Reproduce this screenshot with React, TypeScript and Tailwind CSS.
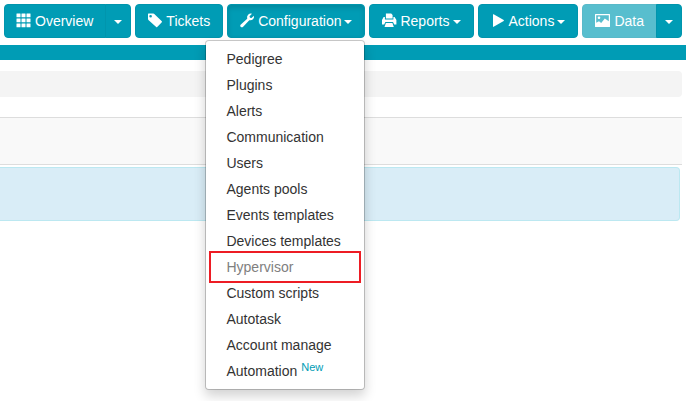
import type { ReactNode } from "react";

const BUTTON_BASE =
  "flex h-[34px] items-center whitespace-nowrap border border-[#0095ad] bg-[#009cb5] text-sm leading-5 text-white";
const BUTTON = `${BUTTON_BASE} gap-1 px-3`;
const CARET_BUTTON = `${BUTTON_BASE} -ml-px justify-center rounded-r px-2`;

function Icon({ children }: { children: ReactNode }) {
  return (
    <svg aria-hidden="true" viewBox="0 0 14 14" className="size-3.5 shrink-0 overflow-visible" fill="currentColor">
      {children}
    </svg>
  );
}

function GridIcon() {
  return (
    <Icon>
      {[0, 5, 10].map((y) =>
        [0, 5, 10].map((x) => <rect key={`${x}-${y}`} x={x - 0.5} y={y - 0.5} width="4" height="3.8" rx="0.3" />),
      )}
    </Icon>
  );
}

function TagIcon() {
  return (
    <Icon>
      <path
        fillRule="evenodd"
        d="M0.5 -0.5H5.4L6.3 -0.1L13.8 7.2Q14.2 7.7 13.8 8.2L9.2 13Q8.7 13.5 8.2 13L0.4 6L0 5.1V0Q0 -0.5 0.5 -0.5ZM2.6 0.9A1.3 1.3 0 1 0 2.6 3.5A1.3 1.3 0 1 0 2.6 0.9Z"
      />
    </Icon>
  );
}

function WrenchIcon() {
  return (
    <Icon>
      <path d="M12 -0.3L9.5 2.2L10 3.7L11.5 4.1L13.9 1.7Q14.4 3.8 13 5.3Q11.5 6.7 9.3 6.2L2.9 13Q1.8 13.8 0.6 12.8Q-0.3 11.7 0.6 10.7L7.2 4.7Q6.6 2.3 8.1 0.7Q9.9 -1 12 -0.3Z" />
    </Icon>
  );
}

function PrintIcon() {
  return (
    <Icon>
      <path d="M3.9 -0.5H9.2L10.6 1V4.6H3.9ZM1.6 3H2.9V5.5H11.4V3H12.6L14.4 6V10.6H12.2L11 8H3.4L2.2 10.6H0V6ZM3.9 9H10.4L11.8 12.9H2.5Z" />
    </Icon>
  );
}

function PlayIcon() {
  return (
    <Icon>
      <path d="M2 0.6Q2 0 2.6 0.3L12.7 6.1Q13.2 6.5 12.7 6.9L2.6 12.8Q2 13.1 2 12.5Z" />
    </Icon>
  );
}

function PictureIcon() {
  return (
    <svg aria-hidden="true" viewBox="0 0 15 14" className="h-3.5 w-[15px] shrink-0" fill="currentColor">
      <path
        fillRule="evenodd"
        d="M0.5 0H14.5Q15 0 15 0.5V12.5Q15 13 14.5 13H0.5Q0 13 0 12.5V0.5Q0 0 0.5 0ZM1.2 1.2V8.8L4 7.2L6.2 9L9.8 4.6L13.8 7.2V1.2Z"
      />
      <circle cx="4" cy="3.8" r="1.3" />
    </svg>
  );
}

function Caret() {
  return <span aria-hidden="true" className="mt-0.5 size-0 border-x-4 border-t-4 border-x-transparent border-t-white" />;
}

function LabelCaret() {
  return (
    <span className="-ml-px flex">
      <Caret />
    </span>
  );
}

const MENU = [
  "Pedigree",
  "Plugins",
  "Alerts",
  "Communication",
  "Users",
  "Agents pools",
  "Events templates",
  "Devices templates",
  "Hypervisor",
  "Custom scripts",
  "Autotask",
  "Account manage",
  "Automation",
];

function ConfigurationMenu() {
  return (
    <ul className="absolute right-0 top-full z-10 mt-0.5 w-40 rounded border border-black/20 bg-white bg-clip-padding py-[5px] text-sm leading-5 text-[#333333] shadow-[0_6px_12px_rgba(0,0,0,0.175)]">
      {MENU.map((label) => (
        <li key={label} className="relative">
          <a href="#" className={`block whitespace-nowrap px-5 py-[3px] ${label === "Hypervisor" ? "text-[#808080]" : ""}`}>
            {label}
            {label === "Automation" && (
              <>
                {" "}
                <sup className="text-[11px] text-[#009cb5]">New</sup>
              </>
            )}
          </a>
          {label === "Hypervisor" && (
            <span className="pointer-events-none absolute -inset-y-[3px] inset-x-[3px] border-2 border-[#ed1c24]" />
          )}
        </li>
      ))}
    </ul>
  );
}

export default function App() {
  return (
    <div className="bg-white pb-[180px] font-['Liberation_Sans',Arial,sans-serif]">
      <nav className="flex gap-1 px-1 pt-1">
        <div className="flex">
          <button type="button" className={`${BUTTON} rounded-l`}>
            <GridIcon />
            Overview
          </button>
          <button type="button" aria-label="Overview options" className={CARET_BUTTON}>
            <Caret />
          </button>
        </div>
        <button type="button" className={`${BUTTON} rounded`}>
          <TagIcon />
          Tickets
        </button>
        <div className="relative">
          <button
            type="button"
            aria-expanded="true"
            className={`${BUTTON} rounded shadow-[inset_0_3px_5px_rgba(0,0,0,0.125)]`}
          >
            <WrenchIcon />
            Configuration
            <LabelCaret />
          </button>
          <ConfigurationMenu />
        </div>
        <button type="button" className={`${BUTTON} rounded`}>
          <PrintIcon />
          Reports
          <LabelCaret />
        </button>
        <button type="button" className={`${BUTTON} rounded`}>
          <PlayIcon />
          Actions
          <LabelCaret />
        </button>
        <div className="flex">
          <button type="button" disabled className={`${BUTTON} rounded-l opacity-65`}>
            <PictureIcon />
            Data
          </button>
          <button type="button" aria-label="Data options" className={CARET_BUTTON}>
            <Caret />
          </button>
        </div>
      </nav>
      <div className="mt-[7px] h-[15px] bg-[#009cb5]" />
      <main className="pr-1">
        <div className="mt-[11px] h-[26px] rounded-r bg-[#f4f4f4]" />
        <div className="mt-5 h-12 border-y border-[#dddddd] bg-[#f9f9f9]" />
        <div className="mr-0.5 mt-0.5 h-[54px] rounded-r border border-l-0 border-[#bce8f1] bg-[#d9edf7]" />
      </main>
    </div>
  );
}
